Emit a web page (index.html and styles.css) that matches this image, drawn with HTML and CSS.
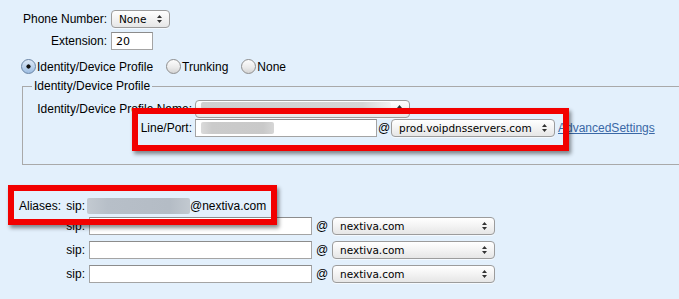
FILE: index.html
```html
<!DOCTYPE html>
<html lang="en">
<head>
    <meta charset="UTF-8">
    <title>Line Settings</title>
    <link rel="stylesheet" href="styles.css">
</head>
<body>

<div id="page">
    <div class="top-fields">
        <label class="field-label" for="phone-number">Phone Number:</label>
        <span class="select-wrap">
            <select id="phone-number" class="mac-select phone-select"><option>None</option></select>
            <svg class="select-arrows" width="5" height="8" viewBox="0 0 5 8"><path d="M2.5 0L5 3H0z M0 5h5L2.5 8z"/></svg>
        </span>
        <label class="field-label" for="extension">Extension:</label>
        <input type="text" id="extension" class="text-input ext-input" value="20">
    </div>

    <div class="profile-type">
        <label><input type="radio" name="ptype" checked>Identity/Device Profile</label>
        <label><input type="radio" name="ptype">Trunking</label>
        <label><input type="radio" name="ptype">None</label>
    </div>

    <fieldset class="profile-box">
        <legend>Identity/Device Profile</legend>
        <div class="profile-grid">
            <label class="field-label">Identity/Device Profile Name:</label>
            <span class="select-wrap">
                <select class="mac-select name-select"><option></option></select>
                <span class="blurred name-blur"></span>
                <svg class="select-arrows" width="5" height="8" viewBox="0 0 5 8"><path d="M2.5 0L5 3H0z M0 5h5L2.5 8z"/></svg>
            </span>

            <label class="field-label">Line/Port:</label>
            <div class="line-port">
                <div class="text-input port-input"><span class="blurred port-blur"></span></div>
                <span class="at">@</span>
                <span class="select-wrap">
                    <select class="mac-select server-select"><option>prod.voipdnsservers.com</option></select>
                    <svg class="select-arrows" width="5" height="8" viewBox="0 0 5 8"><path d="M2.5 0L5 3H0z M0 5h5L2.5 8z"/></svg>
                </span>
                <a href="#" class="adv-link">AdvancedSettings</a>
            </div>
        </div>
    </fieldset>

    <div class="aliases">
        <div class="alias-row alias-head">
            <span class="alias-label"><span>Aliases:</span><span>sip:</span></span>
            <span class="blurred alias-blur"></span>
            <span>@nextiva.com</span>
        </div>
        <div class="alias-row">
            <span class="alias-label">sip:</span>
            <input type="text" class="text-input sip-input">
            <span class="at">@</span>
            <span class="select-wrap">
                <select class="mac-select domain-select"><option>nextiva.com</option></select>
                <svg class="select-arrows" width="5" height="8" viewBox="0 0 5 8"><path d="M2.5 0L5 3H0z M0 5h5L2.5 8z"/></svg>
            </span>
        </div>
        <div class="alias-row">
            <span class="alias-label">sip:</span>
            <input type="text" class="text-input sip-input">
            <span class="at">@</span>
            <span class="select-wrap">
                <select class="mac-select domain-select"><option>nextiva.com</option></select>
                <svg class="select-arrows" width="5" height="8" viewBox="0 0 5 8"><path d="M2.5 0L5 3H0z M0 5h5L2.5 8z"/></svg>
            </span>
        </div>
        <div class="alias-row">
            <span class="alias-label">sip:</span>
            <input type="text" class="text-input sip-input">
            <span class="at">@</span>
            <span class="select-wrap">
                <select class="mac-select domain-select"><option>nextiva.com</option></select>
                <svg class="select-arrows" width="5" height="8" viewBox="0 0 5 8"><path d="M2.5 0L5 3H0z M0 5h5L2.5 8z"/></svg>
            </span>
        </div>
    </div>

    <!-- highlight boxes drawn over the form -->
    <div class="callout callout-line"></div>
    <div class="callout callout-alias"></div>
</div>

</body>
</html>
```

FILE: styles.css
```css
body {
    margin: 0;
    background: #e3f0fc;
    font: 12px "Liberation Sans", Arial, sans-serif;
    color: #000;
}

#page {
    position: relative;
    height: 299px;
    padding-top: 10px;
    box-sizing: border-box;
    overflow: hidden;
}

.field-label { justify-self: end; white-space: nowrap; }

/* Phone number / extension */
.top-fields {
    display: grid;
    grid-template-columns: 107px auto;
    grid-auto-rows: 18px;
    column-gap: 4px;
    row-gap: 4px;
    align-items: center;
    justify-items: start;
}

/* Mac style controls */
.text-input {
    height: 18px;
    box-sizing: border-box;
    border: 1px solid #a4a4a4;
    border-top-color: #8c8c8c;
    background: #fff;
    margin: 0;
    padding: 0 4px;
    font: 11px "DejaVu Sans", sans-serif;
}

.select-wrap {
    position: relative;
    display: inline-block;
    height: 18px;
}

.mac-select {
    appearance: none;
    -webkit-appearance: none;
    display: block;
    height: 18px;
    margin: 0;
    padding: 0 0 0 7px;
    border: 1px solid #9c9c9c;
    border-radius: 4px;
    background: linear-gradient(#ffffff, #f3f3f3 50%, #e6e6e6);
    box-shadow: 0 1px 0 rgba(255, 255, 255, 0.6);
    font: 10.5px "DejaVu Sans", sans-serif;
    color: #000;
}

.select-arrows {
    position: absolute;
    right: 8px;
    top: 5px;
    fill: #333;
}

.phone-select { width: 59px; }
.ext-input { width: 42px; }
.name-select { width: 215px; }
.server-select { width: 164px; }
.domain-select { width: 163px; }

.blurred {
    display: block;
    border-radius: 2px;
}

.name-blur {
    position: absolute;
    left: 6px;
    top: 2px;
    width: 190px;
    height: 7px;
    background: linear-gradient(90deg, #cfcfcf, #d6d6d6 85%, #f2f2f2);
}

/* Radios */
.profile-type {
    display: flex;
    align-items: center;
    height: 15px;
    margin: 9px 0 0 21px;
}

.profile-type label {
    display: flex;
    align-items: center;
    margin-right: 13px;
}

.profile-type input {
    appearance: none;
    -webkit-appearance: none;
    width: 15px;
    height: 15px;
    margin: 0 1px 0 0;
    border: 1px solid #8e8e8e;
    border-radius: 50%;
    background: linear-gradient(#fdfdfd, #e9e9e9 60%, #d4d4d4);
}

.profile-type input:checked {
    border-color: #6a84a4;
    background: radial-gradient(circle, #111 0 1.8px, transparent 2.4px),
                linear-gradient(#dde9f6, #b7d0ec 60%, #9dbde2);
}

/* Identity/Device Profile group */
.profile-box {
    width: 700px;
    min-width: 0;
    margin: 5px 0 0 22px;
    padding: 7px 0 27px 0;
    border: 1px solid #a9a9a9;
}

.profile-box legend {
    margin-left: 9px;
    padding: 0 2px;
    line-height: 14px;
}

.profile-grid {
    display: grid;
    grid-template-columns: 169px auto;
    grid-auto-rows: 18px;
    column-gap: 3px;
    row-gap: 1px;
    align-items: center;
    justify-items: start;
}

.line-port {
    display: flex;
    align-items: center;
}

.port-input {
    width: 182px;
    padding: 2px 0 0 5px;
}

.port-blur {
    width: 73px;
    height: 12px;
    background: linear-gradient(90deg, #dadada, #cbcbcb 15%, #c9c9c9 85%, #d6d6d6);
}

.at { width: 12px; margin: 0 1px; }

.adv-link {
    margin-left: 3px;
    color: #3a68a6;
}

/* Aliases */
.aliases { margin: 33px 0 0 19px; }

.alias-row {
    display: flex;
    align-items: center;
    height: 18px;
    margin-bottom: 6px;
}

.alias-row.alias-head {
    height: 16px;
    margin-bottom: 3px;
}

.alias-label {
    width: 66px;
    flex-shrink: 0;
    margin-right: 4px;
    text-align: right;
}

.alias-head .alias-label {
    display: flex;
    justify-content: space-between;
    margin-right: 2px;
}

.alias-blur {
    width: 103px;
    height: 16px;
    background: linear-gradient(90deg, #c3cad1, #b7bfc8 20%, #b4bcc5 80%, #c2c9d0);
}

.sip-input { width: 223px; }

.alias-row .at { margin: 0 4px; }

/* Red highlight boxes */
.callout {
    position: absolute;
    box-sizing: border-box;
    border: 6px solid #f20000;
    box-shadow: 2px 3px 4px rgba(0, 0, 0, 0.45);
}

.callout-line { left: 132px; top: 108px; width: 437px; height: 43px; }
.callout-alias { left: 8px; top: 185px; width: 269px; height: 40px; }
```
